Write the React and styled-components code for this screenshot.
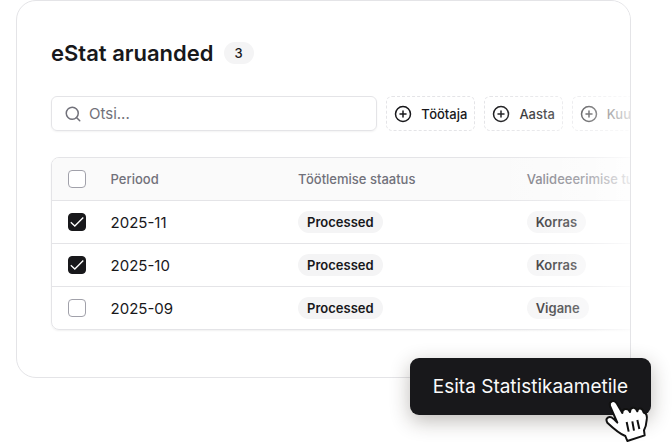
import React, { useState } from "react";
import styled, { createGlobalStyle } from "styled-components";
import { CirclePlus, Search } from "lucide-react";

const GlobalStyle = createGlobalStyle`
  *, *::before, *::after {
    box-sizing: border-box;
  }
  body {
    margin: 0;
    background: #fff;
    color: #18181b;
    font-family: Inter, "Liberation Sans", sans-serif;
    -webkit-font-smoothing: antialiased;
  }
  button, input {
    font: inherit;
    color: inherit;
  }
`;

const Stage = styled.main`
  position: relative;
  padding: 0 41px 68px 16px;
`;

const Card = styled.section`
  position: relative;
  overflow: hidden;
  padding: 37px 0 47px 34px;
  border: 1px solid #e4e4e7;
  border-radius: 20px;

  &::after {
    content: "";
    position: absolute;
    top: 0;
    right: 0;
    bottom: 0;
    width: 144px;
    background: linear-gradient(
      to right,
      rgba(255, 255, 255, 0),
      rgba(255, 255, 255, 0.4) 70%,
      rgba(255, 255, 255, 0.85)
    );
    pointer-events: none;
  }
`;

const Content = styled.div`
  margin-right: -9px;
`;

const Header = styled.header`
  display: flex;
  align-items: center;
  gap: 10px;
  height: 30px;
  margin-bottom: 28px;
`;

const Title = styled.h1`
  margin: 0;
  font-size: 22px;
  font-weight: 600;
  line-height: 28px;
`;

const Badge = styled.span`
  display: inline-block;
  padding: 0 ${props => (props.$count ? 11 : 9)}px;
  border-radius: 11px;
  background: #f4f4f5;
  font-size: 13px;
  font-weight: ${props => (props.$count ? 500 : 600)};
  line-height: 22px;
`;

const Toolbar = styled.div`
  display: flex;
  gap: 9px;
  margin-bottom: 26px;
`;

const SearchBox = styled.label`
  display: flex;
  flex: 1;
  align-items: center;
  gap: 7px;
  min-width: 0;
  height: 35px;
  padding: 0 12px;
  border: 1px solid #e4e4e7;
  border-radius: 6px;
  box-shadow: 0 1px 2px rgba(0, 0, 0, 0.05);
  color: #71717a;
`;

const SearchInput = styled.input`
  flex: 1;
  min-width: 0;
  padding: 0;
  border: 0;
  outline: 0;
  background: none;
  font-size: 15px;

  &::placeholder {
    color: #71717a;
    opacity: 1;
  }
`;

const FilterButton = styled.button`
  display: flex;
  flex: none;
  align-items: center;
  gap: 9px;
  height: 35px;
  padding: 0 7px;
  border: 1px dashed #e4e4e7;
  border-radius: 6px;
  background: #fff;
  font-size: 13px;
  font-weight: 500;
`;

const TableFrame = styled.div`
  overflow: hidden;
  border: 1px solid #e4e4e7;
  border-radius: 8px;
  box-shadow: 0 1px 2px rgba(0, 0, 0, 0.06);
`;

const Table = styled.table`
  width: 100%;
  border-collapse: separate;
  border-spacing: 0;
  table-layout: fixed;
  text-align: left;
`;

const HeadCell = styled.th`
  width: ${props => props.$width || "auto"};
  height: 42px;
  padding: 0 0 0 ${props => (props.$check ? 16 : 0)}px;
  background: #fafafa;
  color: #71717a;
  font-size: 13px;
  font-weight: 500;
  white-space: nowrap;
`;

const Cell = styled.td`
  height: 43px;
  padding: 0 0 0 ${props => (props.$check ? 16 : 0)}px;
  border-top: 1px solid #e4e4e7;
  font-size: 15px;
  vertical-align: middle;
`;

const Checkbox = styled.span`
  display: grid;
  width: 18px;
  height: 18px;

  & > * {
    grid-area: 1 / 1;
  }
  input {
    appearance: none;
    width: 18px;
    height: 18px;
    margin: 0;
    border: 1px solid #a1a1aa;
    border-radius: 4px;
    background: #fff;
  }
  input:checked {
    border-color: #18181b;
    background: #18181b;
  }
  svg {
    pointer-events: none;
  }
`;

const SubmitButton = styled.button`
  position: absolute;
  right: 21px;
  bottom: 31px;
  height: 57px;
  padding: 0 23px;
  border: 0;
  border-radius: 9px;
  background: #18181b;
  box-shadow: 0 6px 20px rgba(40, 30, 20, 0.3);
  color: #fafafa;
  font-size: 19px;
  font-weight: 400;
  white-space: nowrap;
`;

const Pointer = styled.svg`
  position: absolute;
  right: 16px;
  bottom: 2px;
  pointer-events: none;
`;

const initialRows = [
  { period: "2025-11", status: "Processed", validation: "Korras", checked: true },
  { period: "2025-10", status: "Processed", validation: "Korras", checked: true },
  { period: "2025-09", status: "Processed", validation: "Vigane", checked: false }
];

const filters = ["Töötaja", "Aasta", "Kuu"];

const Tick = ({ label, checked, onChange }) => (
  <Checkbox>
    <input type="checkbox" aria-label={label} checked={checked} onChange={onChange} />
    {checked && (
      <svg width="18" height="18" viewBox="0 0 18 18" fill="none" stroke="#fff" strokeWidth="1.3">
        <path d="M2.8 9.3 6.8 13 15.3 4.5" />
      </svg>
    )}
  </Checkbox>
);

const App = () => {
  const [rows, setRows] = useState(initialRows);
  const allChecked = rows.every(row => row.checked);

  const toggle = period =>
    setRows(rows.map(row => (row.period === period ? { ...row, checked: !row.checked } : row)));

  const toggleAll = () => setRows(rows.map(row => ({ ...row, checked: !allChecked })));

  return (
    <Stage>
      <GlobalStyle />
      <Card>
        <Content>
          <Header>
            <Title>eStat aruanded</Title>
            <Badge $count>{rows.length}</Badge>
          </Header>
          <Toolbar>
            <SearchBox>
              <Search size={18} strokeWidth={2} />
              <SearchInput type="text" placeholder="Otsi..." aria-label="Otsi" />
            </SearchBox>
            {filters.map(name => (
              <FilterButton key={name} type="button">
                <CirclePlus size={18} strokeWidth={2} />
                {name}
              </FilterButton>
            ))}
          </Toolbar>
          <TableFrame>
            <Table>
              <thead>
                <tr>
                  <HeadCell $check $width="10%">
                    <Tick label="Vali kõik" checked={allChecked} onChange={toggleAll} />
                  </HeadCell>
                  <HeadCell $width="32%">Periood</HeadCell>
                  <HeadCell $width="39%">Töötlemise staatus</HeadCell>
                  <HeadCell>Valideeerimise tulemus</HeadCell>
                </tr>
              </thead>
              <tbody>
                {rows.map(row => (
                  <tr key={row.period}>
                    <Cell $check>
                      <Tick
                        label={row.period}
                        checked={row.checked}
                        onChange={() => toggle(row.period)}
                      />
                    </Cell>
                    <Cell>{row.period}</Cell>
                    <Cell>
                      <Badge>{row.status}</Badge>
                    </Cell>
                    <Cell>
                      <Badge>{row.validation}</Badge>
                    </Cell>
                  </tr>
                ))}
              </tbody>
            </Table>
          </TableFrame>
        </Content>
      </Card>
      <SubmitButton type="button">Esita Statistikaametile</SubmitButton>
      <Pointer
        width="56"
        height="48"
        viewBox="0 0 168 144"
        fill="none"
        stroke="#111"
        strokeWidth="6"
        strokeLinejoin="round"
      >
        <path
          d="M52 80 30 30C26 17 42 9 50 22L67 51C66 37 84 34 90 48C90 33 106 30 112 46C114 33 128 35 131 50C140 50 142 62 140 72C139 86 138 92 132 103L134 118L82 135L76 120C58 113 40 97 22 80C14 66 28 58 40 68Z"
          fill="#fff"
        />
        <path d="M80 78 86 107M97 76 102 104M112 72 118 99" />
      </Pointer>
    </Stage>
  );
};

export default App;
